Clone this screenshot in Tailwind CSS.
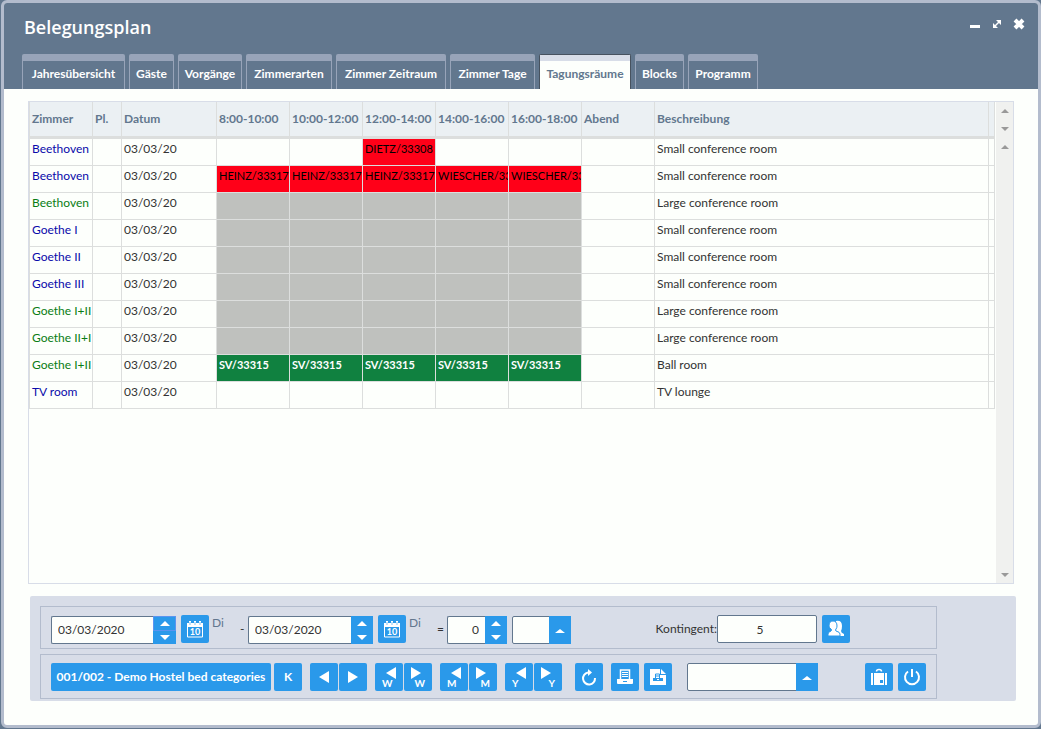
<!DOCTYPE html>
<html lang="de">
<head>
  <meta charset="UTF-8" />
  <meta name="viewport" content="width=device-width, initial-scale=1.0"/>
  <title>Belegungsplan</title>
  <script src="https://cdn.jsdelivr.net/npm/@tailwindcss/browser@4"></script>
</head>
<body class="flex flex-col min-h-screen pl-px pb-px bg-[#62778e] font-['Lato','Noto_Sans',sans-serif] text-[12px] leading-4 text-[#333333]">
  <div class="flex flex-col flex-1 bg-[#fdfffc] border-3 border-[#b3bccd] rounded-md overflow-hidden">

    <!-- Title bar and tabs -->
    <header class="bg-[#62778e] text-white">
      <div class="flex justify-between items-start h-[51px] pl-5 pr-[13px]">
        <h1 class="pt-2.5 font-['Open_Sans',sans-serif] text-[18px] leading-7 font-semibold">Belegungsplan</h1>
        <div class="flex items-center gap-[11px] pt-[15px]">
          <button type="button" aria-label="Minimieren"><svg class="w-3 h-3" viewBox="0 0 12 12"><path d="M1 7h10v3H1z" fill="#fff"/></svg></button>
          <button type="button" aria-label="Maximieren"><svg class="w-2.5 h-3" viewBox="0 0 10 12"><path d="M4 2h5v5zM1 5v5h5z" fill="#fff"/><path d="M2.500 8.500l5-5" stroke="#fff" stroke-width="1.500"/></svg></button>
          <button type="button" aria-label="Schließen"><svg class="w-3 h-3" viewBox="0 0 12 12"><path d="M2 2l8 8M10 2l-8 8" stroke="#fff" stroke-width="4"/></svg></button>
        </div>
      </div>
      <nav class="flex gap-1 pl-[18px] text-[12px] font-bold">
        <a href="#" class="flex justify-center w-[103px] h-[35px] pt-[5px] border border-b-0 border-t-7 border-[#98a4b9] rounded-t-xs">Jahresübersicht</a>
        <a href="#" class="flex justify-center w-[45px] h-[35px] pt-[5px] border border-b-0 border-t-7 border-[#98a4b9] rounded-t-xs">Gäste</a>
        <a href="#" class="flex justify-center w-[64px] h-[35px] pt-[5px] border border-b-0 border-t-7 border-[#98a4b9] rounded-t-xs">Vorgänge</a>
        <a href="#" class="flex justify-center w-[86px] h-[35px] pt-[5px] border border-b-0 border-t-7 border-[#98a4b9] rounded-t-xs">Zimmerarten</a>
        <a href="#" class="flex justify-center w-[110px] h-[35px] pt-[5px] border border-b-0 border-t-7 border-[#98a4b9] rounded-t-xs">Zimmer Zeitraum</a>
        <a href="#" class="flex justify-center w-[85px] h-[35px] pt-[5px] border border-b-0 border-t-7 border-[#98a4b9] rounded-t-xs">Zimmer Tage</a>
        <a href="#" class="flex flex-col w-[92px] h-[35px] border border-b-0 border-[#47525f] rounded-t-xs bg-[#fdfffc] text-[#62778e] text-center" aria-current="page"><span class="h-1.5 mb-[5px] bg-[#d8dde8]"></span>Tagungsräume</a>
        <a href="#" class="flex justify-center w-[49px] h-[35px] pt-[5px] border border-b-0 border-t-7 border-[#98a4b9] rounded-t-xs">Blocks</a>
        <a href="#" class="flex justify-center w-[70px] h-[35px] pt-[5px] border border-b-0 border-t-7 border-[#98a4b9] rounded-t-xs">Programm</a>
      </nav>
    </header>

    <!-- Room table -->
    <main class="flex flex-1 gap-px mx-6 mt-3 border border-[#d8dde8]">
      <div class="flex-1 min-w-0">
        <table class="w-full table-fixed border-separate border-spacing-0">
          <colgroup>
            <col class="w-[64px]"><col class="w-[29px]"><col class="w-[95px]">
            <col class="w-[73px]"><col class="w-[73px]"><col class="w-[73px]"><col class="w-[73px]"><col class="w-[73px]"><col class="w-[73px]">
            <col><col class="w-[6px]">
          </colgroup>
          <thead>
            <tr class="h-[37px] bg-[#ebf0f3] text-left text-[#62778e] whitespace-nowrap *:border-r *:border-b-3 *:border-[#dcdedd] *:pl-0.5 *:font-bold">
              <th class="border-l">Zimmer</th>
              <th>Pl.</th>
              <th>Datum</th>
              <th>8:00-10:00</th>
              <th>10:00-12:00</th>
              <th>12:00-14:00</th>
              <th>14:00-16:00</th>
              <th>16:00-18:00</th>
              <th>Abend</th>
              <th>Beschreibung</th>
              <th></th>
            </tr>
          </thead>
          <tbody id="rooms"></tbody>
        </table>
      </div>
      <div class="flex flex-col justify-between items-center w-[17px] pt-1.5 pb-1.5 bg-[#f0f1ef]">
        <div class="flex flex-col gap-[14px] pt-px">
          <svg class="w-2 h-1" viewBox="0 0 8 4"><path d="M0 4l4-4 4 4z" fill="#999"/></svg>
          <svg class="w-2 h-1" viewBox="0 0 8 4"><path d="M0 0l4 4 4-4z" fill="#999"/></svg>
          <svg class="w-2 h-1" viewBox="0 0 8 4"><path d="M0 4l4-4 4 4z" fill="#999"/></svg>
        </div>
        <svg class="w-2 h-1" viewBox="0 0 8 4"><path d="M0 0l4 4 4-4z" fill="#999"/></svg>
      </div>
    </main>

    <!-- Controls -->
    <form class="mt-3 mb-6 ml-[26px] mr-[22px] pt-2.5 pb-0.5 pl-2.5 pr-[79px] bg-[#d8dde8] rounded-xs">
      <div class="flex items-start h-[43px] pl-2.5 pt-2 mb-[5px] border border-[#b3bccd]">
        <div class="flex h-7 w-[125px] mt-px">
          <input type="text" aria-label="Von" value="03/03/2020" class="w-[102px] pl-1.5 bg-[#fdfffc] border border-r-0 border-[#62778e] rounded-l-xs">
          <div class="flex flex-col flex-1 bg-[#2a99ea]">
            <button type="button" aria-label="Von vor" class="flex-1 flex items-center justify-center border border-[#5a94f0]"><svg class="w-2.5 h-[5px]" viewBox="0 0 10 5"><path d="M0 5l5-5 5 5z" fill="#fff"/></svg></button>
            <button type="button" aria-label="Von zurück" class="flex-1 flex items-center justify-center"><svg class="w-2.5 h-[5px]" viewBox="0 0 10 5"><path d="M0 0l5 5 5-5z" fill="#fff"/></svg></button>
          </div>
        </div>
        <button type="button" aria-label="Kalender" class="flex items-center justify-center size-7 ml-[5px] bg-[#2a99ea] rounded-xs">
          <svg class="size-[18px]" viewBox="0 0 18 18"><path d="M1 3h16v4H1zM3 1h2v3H3zM8 1h2v3H8zM13 1h2v3h-2z" fill="#fff"/><path d="M1.500 6v11h15V6z" fill="none" stroke="#fff"/><path d="M4 2v3M9 2v3M14 2v3" stroke="#2a99ea" stroke-width=".6"/><text x="9" y="15" text-anchor="middle" font-size="9" font-weight="bold" fill="#fff">10</text></svg>
        </button>
        <span class="w-[31px] pl-[3px] text-[#62778e]">Di</span>
        <span class="w-2 pt-1.5">-</span>
        <div class="flex h-7 w-[125px] mt-px">
          <input type="text" aria-label="Bis" value="03/03/2020" class="w-[103px] pl-1.5 bg-[#fdfffc] border border-r-0 border-[#62778e] rounded-l-xs">
          <div class="flex flex-col flex-1 bg-[#2a99ea]">
            <button type="button" aria-label="Bis vor" class="flex-1 flex items-center justify-center"><svg class="w-2.5 h-[5px]" viewBox="0 0 10 5"><path d="M0 5l5-5 5 5z" fill="#fff"/></svg></button>
            <button type="button" aria-label="Bis zurück" class="flex-1 flex items-center justify-center"><svg class="w-2.5 h-[5px]" viewBox="0 0 10 5"><path d="M0 0l5 5 5-5z" fill="#fff"/></svg></button>
          </div>
        </div>
        <button type="button" aria-label="Kalender" class="flex items-center justify-center size-7 ml-[5px] bg-[#2a99ea] rounded-xs">
          <svg class="size-[18px]" viewBox="0 0 18 18"><path d="M1 3h16v4H1zM3 1h2v3H3zM8 1h2v3H8zM13 1h2v3h-2z" fill="#fff"/><path d="M1.500 6v11h15V6z" fill="none" stroke="#fff"/><path d="M4 2v3M9 2v3M14 2v3" stroke="#2a99ea" stroke-width=".6"/><text x="9" y="15" text-anchor="middle" font-size="9" font-weight="bold" fill="#fff">10</text></svg>
        </button>
        <span class="w-[31px] pl-[3px] text-[#62778e]">Di</span>
        <span class="w-2.5 pt-1.5">=</span>
        <div class="flex h-7 w-[60px] mt-px">
          <input type="text" aria-label="Tage" value="0" class="w-[38px] pr-1.5 text-right bg-[#fdfffc] border border-r-0 border-[#62778e] rounded-l-xs">
          <div class="flex flex-col flex-1 bg-[#2a99ea]">
            <button type="button" aria-label="Mehr Tage" class="flex-1 flex items-center justify-center"><svg class="w-2.5 h-[5px]" viewBox="0 0 10 5"><path d="M0 5l5-5 5 5z" fill="#fff"/></svg></button>
            <button type="button" aria-label="Weniger Tage" class="flex-1 flex items-center justify-center"><svg class="w-2.5 h-[5px]" viewBox="0 0 10 5"><path d="M0 0l5 5 5-5z" fill="#fff"/></svg></button>
          </div>
        </div>
        <div class="relative w-[59px] h-7 mt-px ml-[5px]">
          <select aria-label="Filter" class="appearance-none w-full h-full bg-[#fdfffc] border border-[#62778e] rounded-xs"><option></option></select>
          <span class="absolute inset-y-0 right-0 flex items-center justify-center w-[22px] pt-0.5 bg-[#2a99ea] pointer-events-none"><svg class="w-2.5 h-1" viewBox="0 0 10 4"><path d="M0 4l5-4 5 4z" fill="#fff"/></svg></span>
        </div>
        <label for="quota" class="ml-auto pt-1.5">Kontingent:</label>
        <input type="text" id="quota" value="5" class="w-[100px] h-7 pr-3.5 text-center bg-[#fdfffc] border border-[#62778e] rounded-xs">
        <button type="button" aria-label="Gäste" class="flex items-center justify-center size-7 ml-[5px] mr-[86px] bg-[#2a99ea] rounded-xs">
          <svg class="size-[18px]" viewBox="0 0 18 18"><path d="M9 1q6-1 6 5 0 3-1 5 0 2 3 3v2H7z" fill="#fff"/><path d="M6 1q4 0 4 5 0 2-1 3-1 1 0 2 4 1 4 3v2H1v-2q0-2 3-3 1-1 0-2-2-1-2-3 0-5 4-5z" fill="#fff" stroke="#2a99ea"/></svg>
        </button>
      </div>

      <div class="flex items-start h-[45px] pl-2.5 pr-2.5 pt-2 border border-[#b3bccd] text-white font-bold">
        <button type="button" class="w-[220px] h-7 bg-[#2a99ea] rounded-xs">001/002 - Demo Hostel bed categories</button>
        <button type="button" class="size-7 ml-[3px] bg-[#2a99ea] rounded-xs">K</button>
        <div class="flex gap-px ml-2">
          <button type="button" aria-label="Tag zurück" class="flex items-center justify-center size-7 bg-[#2a99ea] rounded-xs"><svg class="w-2.5 h-3" viewBox="0 0 10 12"><path d="M10 0v12L0 6z" fill="#fff"/></svg></button>
          <button type="button" aria-label="Tag vor" class="flex items-center justify-center size-7 bg-[#2a99ea] rounded-xs"><svg class="w-2.5 h-3" viewBox="0 0 10 12"><path d="M0 0v12l10-6z" fill="#fff"/></svg></button>
        </div>
        <div class="flex gap-px ml-2 text-[10px] leading-[8px] font-bold">
          <button type="button" aria-label="Woche zurück" class="flex flex-col justify-center size-7 px-[7px] bg-[#2a99ea] rounded-xs"><svg class="self-end w-2.5 h-3" viewBox="0 0 10 12"><path d="M10 0v12L0 6z" fill="#fff"/></svg><span class="self-start">W</span></button>
          <button type="button" aria-label="Woche vor" class="flex flex-col justify-center size-7 px-[7px] bg-[#2a99ea] rounded-xs"><svg class="self-start w-2.5 h-3" viewBox="0 0 10 12"><path d="M0 0v12l10-6z" fill="#fff"/></svg><span class="self-end">W</span></button>
        </div>
        <div class="flex gap-px ml-2 text-[10px] leading-[8px] font-bold">
          <button type="button" aria-label="Monat zurück" class="flex flex-col justify-center size-7 px-[7px] bg-[#2a99ea] rounded-xs"><svg class="self-end w-2.5 h-3" viewBox="0 0 10 12"><path d="M10 0v12L0 6z" fill="#fff"/></svg><span class="self-start">M</span></button>
          <button type="button" aria-label="Monat vor" class="flex flex-col justify-center size-7 px-[7px] bg-[#2a99ea] rounded-xs"><svg class="self-start w-2.5 h-3" viewBox="0 0 10 12"><path d="M0 0v12l10-6z" fill="#fff"/></svg><span class="self-end">M</span></button>
        </div>
        <div class="flex gap-px ml-2 text-[10px] leading-[8px] font-bold">
          <button type="button" aria-label="Jahr zurück" class="flex flex-col justify-center size-7 px-[7px] bg-[#2a99ea] rounded-xs"><svg class="self-end w-2.5 h-3" viewBox="0 0 10 12"><path d="M10 0v12L0 6z" fill="#fff"/></svg><span class="self-start">Y</span></button>
          <button type="button" aria-label="Jahr vor" class="flex flex-col justify-center size-7 px-[7px] bg-[#2a99ea] rounded-xs"><svg class="self-start w-2.5 h-3" viewBox="0 0 10 12"><path d="M0 0v12l10-6z" fill="#fff"/></svg><span class="self-end">Y</span></button>
        </div>
        <button type="button" aria-label="Aktualisieren" class="flex items-center justify-center size-7 ml-[13px] bg-[#2a99ea] rounded-xs">
          <svg class="size-[18px]" viewBox="0 0 18 18"><path d="M8 4.500a6 6 0 1 0 7 5.500" fill="none" stroke="#fff" stroke-width="2"/><path d="M8 1v7l4-3.500z" fill="#fff"/></svg>
        </button>
        <button type="button" aria-label="Drucken" class="flex items-center justify-center size-7 ml-2 bg-[#2a99ea] rounded-xs">
          <svg class="size-[18px]" viewBox="0 0 18 18"><path d="M4.500 11V2h9v9" fill="none" stroke="#fff" stroke-width="1.500"/><path d="M6 4.500h6M6 6.500h6M6 8.500h6" stroke="#fff"/><path d="M1 11h16v4q0 1-1 1H2q-1 0-1-1z" fill="#fff"/><path d="M7 13h4v1H7z" fill="#2a99ea"/></svg>
        </button>
        <button type="button" aria-label="Vorschau" class="flex items-center justify-center size-7 ml-[5px] bg-[#2a99ea] rounded-xs">
          <svg class="size-[18px]" viewBox="0 0 18 18"><path d="M1 1h10v6h6v10H1zM12 1l5 5h-5z" fill="#fff"/><path d="M6.500 10V6h4v4M7 8h3" fill="none" stroke="#2a99ea"/><path d="M4 10h10v3H4z" fill="#2a99ea"/><path d="M8 11h2v1H8z" fill="#fff"/></svg>
        </button>
        <div class="relative w-[131px] h-7 ml-[15px]">
          <select aria-label="Auswahl" class="appearance-none w-full h-full bg-[#fdfffc] border border-[#62778e] rounded-xs"><option></option></select>
          <span class="absolute inset-y-0 right-0 flex items-center justify-center w-[22px] pt-0.5 bg-[#2a99ea] pointer-events-none"><svg class="w-2.5 h-1" viewBox="0 0 10 4"><path d="M0 4l5-4 5 4z" fill="#fff"/></svg></span>
        </div>
        <button type="button" aria-label="Gepäck" class="flex items-center justify-center size-7 ml-auto bg-[#2a99ea] rounded-xs">
          <svg class="size-[18px]" viewBox="0 0 18 18"><path d="M1 5h2v12H1zM4 5h10v12H4zM15 5h2v12h-2z" fill="#fff"/><path d="M6.500 3.500q0-2 2.500-2t2.500 2" fill="none" stroke="#fff" stroke-width="1.500"/><path d="M10 12h3v3h-3z" fill="#2a99ea"/></svg>
        </button>
        <button type="button" aria-label="Beenden" class="flex items-center justify-center size-7 ml-[5px] bg-[#2a99ea] rounded-xs">
          <svg class="size-[18px]" viewBox="0 0 18 18"><path d="M5 3.500a7 7 0 1 0 8 0M9 1v8" fill="none" stroke="#fff" stroke-width="2"/></svg>
        </button>
      </div>
    </form>
  </div>

  <script>
    const SMALL = 'text-[#0a0aaa]';
    const LARGE = 'text-[#0a7d14]';
    const styles = {
      free: '',
      booked: 'bg-[#ff0018] text-black text-[11px]',
      blocked: 'bg-[#bfc1be]',
      fixed: 'bg-[#108140] text-white font-bold text-[11px]'
    };

    const rooms = [
      { name: 'Beethoven', color: SMALL, state: ['free', 'free', 'booked', 'free', 'free'], slots: ['', '', 'DIETZ/33308', '', ''], info: 'Small conference room' },
      { name: 'Beethoven', color: SMALL, state: 'booked', slots: ['HEINZ/33317', 'HEINZ/33317', 'HEINZ/33317', 'WIESCHER/33', 'WIESCHER/33'], info: 'Small conference room' },
      { name: 'Beethoven', color: LARGE, state: 'blocked', info: 'Large conference room' },
      { name: 'Goethe I', color: SMALL, state: 'blocked', info: 'Small conference room' },
      { name: 'Goethe II', color: SMALL, state: 'blocked', info: 'Small conference room' },
      { name: 'Goethe III', color: SMALL, state: 'blocked', info: 'Small conference room' },
      { name: 'Goethe I+II', color: LARGE, state: 'blocked', info: 'Large conference room' },
      { name: 'Goethe II+I', color: LARGE, state: 'blocked', info: 'Large conference room' },
      { name: 'Goethe I+II', color: LARGE, state: 'fixed', slots: ['SV/33315', 'SV/33315', 'SV/33315', 'SV/33315', 'SV/33315'], info: 'Ball room' },
      { name: 'TV room', color: SMALL, state: 'free', info: 'TV lounge' }
    ];

    const cell = 'h-[27px] pl-0.5 pt-0.5 align-top border-r border-b border-[#dcdedd] whitespace-nowrap overflow-hidden ';

    document.getElementById('rooms').innerHTML = rooms.map(room => {
      let html = `<td class="${cell}border-l ${room.color}">${room.name}</td><td class="${cell}"></td><td class="${cell}">03/03/20</td>`;
      for (let i = 0; i < 5; i++) {
        const state = Array.isArray(room.state) ? room.state[i] : room.state;
        html += `<td class="${cell}${styles[state]}">${room.slots ? room.slots[i] : ''}</td>`;
      }
      return `<tr>${html}<td class="${cell}"></td><td class="${cell}">${room.info}</td><td class="${cell}"></td></tr>`;
    }).join('');
  </script>
</body>
</html>
